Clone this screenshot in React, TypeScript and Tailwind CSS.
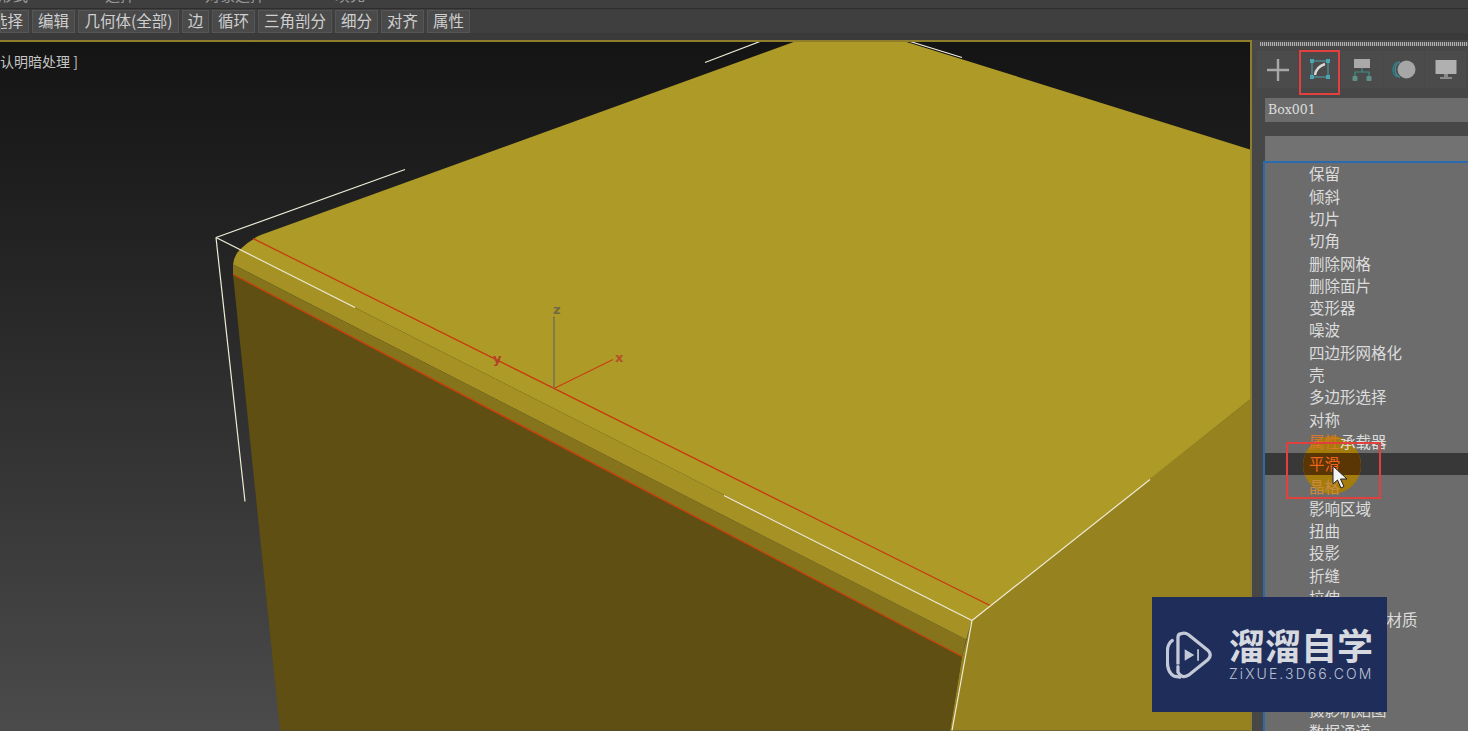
import React from "react";

const tools = [
  ["选择", "w-[29px] justify-end pr-[5px]"],
  ["编辑", "w-[43px] justify-center"],
  ["几何体(全部)", "w-[101px] justify-center"],
  ["边", "w-[27px] justify-center"],
  ["循环", "w-[43px] justify-center"],
  ["三角剖分", "w-[74px] justify-center"],
  ["细分", "w-[43px] justify-center"],
  ["对齐", "w-[43px] justify-center"],
  ["属性", "w-[43px] justify-center"],
];

const mods = [
  "保留", "倾斜", "切片", "切角", "删除网格", "删除面片", "变形器", "噪波", "四边形网格化", "壳",
  "多边形选择", "对称", "属性承载器", "平滑", "晶格", "影响区域", "扭曲", "投影", "折缝", "拉伸",
  "按元素分配材质", "", "", "", "摄影机贴图", "数据通道",
];

function Scene() {
  return (
    <svg viewBox="0 43 1250 688" className="block w-full h-full">
      {/* right face */}
      <polygon points="972,620 1250,400 1250,731 950,731 962,657" fill="#96831f" />
      {/* top face */}
      <path d="M262,235 L795,42 L905,42 L1250,150 L1250,400 L972,621 L240,250 Q250,240 262,235 Z" fill="#ae9a26" />
      {/* light bevel */}
      <path d="M240,250 L972,621 L966,640 L233,265 Q234,256 240,250 Z" fill="#a59124" />
      {/* dark bevel */}
      <polygon points="233,265 966,640 962,657 233,275" fill="#85741b" />
      {/* front face */}
      <polygon points="233,275 962,657 950,731 280,731" fill="#5f4f12" />
      {/* red edges */}
      <line x1="253" y1="239" x2="990" y2="606" stroke="#c9370f" strokeWidth="1.2" />
      <line x1="233" y1="275" x2="962" y2="657" stroke="#c9400f" strokeWidth="1.4" />
      {/* selection brackets */}
      <g stroke="#efedd8" strokeWidth="1.2" fill="none">
        <line x1="216" y1="238" x2="405" y2="170" />
        <line x1="216" y1="238" x2="355" y2="308" />
        <line x1="216" y1="238" x2="245" y2="502" />
        <line x1="705" y1="63" x2="760" y2="42" />
        <line x1="910" y1="42" x2="962" y2="58" />
        <line x1="724" y1="496" x2="972" y2="621" />
        <line x1="1150" y1="480" x2="972" y2="621" />
        <line x1="972" y1="621" x2="952" y2="731" />
      </g>
      {/* gizmo */}
      <line x1="554" y1="389" x2="554" y2="317" stroke="#75705a" strokeWidth="1.5" />
      <line x1="554" y1="389" x2="613" y2="360" stroke="#c9400f" strokeWidth="1.2" />
      <text x="553" y="314" fontSize="13" fontWeight="700" fill="#6f6a45" fontFamily="DejaVu Sans, sans-serif">z</text>
      <text x="615" y="362" fontSize="13" fontWeight="700" fill="#b5502a" fontFamily="DejaVu Sans, sans-serif">x</text>
      <text x="493" y="363" fontSize="13" fontWeight="700" fill="#b5402a" fontFamily="DejaVu Sans, sans-serif">y</text>
    </svg>
  );
}

function ModifyIcon() {
  return (
    <svg width="20" height="20" viewBox="0 0 20 20" className="-mt-[2px]">
      <rect x="2" y="2" width="16" height="16" fill="none" stroke="#4fa3ad" strokeWidth="1" />
      <rect x="0" y="0" width="4" height="4" fill="#4aa5b3" />
      <rect x="16" y="0" width="4" height="4" fill="#4aa5b3" />
      <rect x="0" y="16" width="4" height="4" fill="#4aa5b3" />
      <rect x="16" y="16" width="4" height="4" fill="#4aa5b3" />
      <path d="M5,16 Q6,8 15,5" fill="none" stroke="#d8d8d8" strokeWidth="2.4" />
    </svg>
  );
}

function HierarchyIcon() {
  return (
    <svg width="20" height="22" viewBox="0 0 20 22">
      <rect x="2" y="0" width="16" height="9" fill="#a9a9a9" />
      <path d="M10,9 V13 M3,18 V13 H17 V18" fill="none" stroke="#3d8f8a" strokeWidth="1.2" />
      <rect x="0.5" y="17" width="5" height="5" rx="1" fill="#5f9088" />
      <rect x="14.5" y="17" width="5" height="5" rx="1" fill="#5f9088" />
    </svg>
  );
}

function MotionIcon() {
  return (
    <svg width="25" height="19" viewBox="0 0 25 19">
      <path d="M6,2 A9,9 0 0 0 6,17" fill="none" stroke="#2f7f86" strokeWidth="1.4" />
      <path d="M9,1.5 A9,9 0 0 0 9,17.5" fill="none" stroke="#3a9098" strokeWidth="1.4" />
      <circle cx="15.5" cy="9.5" r="9" fill="#a6a6a6" />
    </svg>
  );
}

function DisplayIcon() {
  return (
    <svg width="22" height="20" viewBox="0 0 22 20">
      <rect x="0.5" y="0" width="21" height="14" fill="#b0b0b0" />
      <rect x="9" y="14" width="4" height="3" fill="#8a8a8a" />
      <rect x="5" y="17" width="12" height="2" fill="#8a8a8a" />
    </svg>
  );
}

function Logo() {
  return (
    <div className="absolute left-[1152px] top-[597px] w-[235px] h-[115px] bg-[#1f2d5b] z-40 flex items-center pl-[14px] gap-[16px]">
      <svg width="47" height="50" viewBox="0 0 48 52" className="shrink-0">
        <path d="M15,4 Q19,2 23,5 L43,21 Q48,26 43,31 L23,47 Q16,51 12,44 L12,38" fill="none" stroke="#c3c9d6" strokeWidth="3.4" strokeLinecap="round" />
        <path d="M12,36 V8 Q12,4 15,4" fill="none" stroke="#c3c9d6" strokeWidth="3.4" />
        <path d="M6,11 Q1,15 1,22 V33 Q1,44 8,48 L14,49" fill="none" stroke="#c3c9d6" strokeWidth="3.4" strokeLinecap="round" />
        <polygon points="19,20 29,26 19,32" fill="#c3c9d6" />
        <rect x="32" y="20" width="1.8" height="12" fill="#c3c9d6" />
      </svg>
      <div className="flex flex-col -mt-[4px]">
        <div className="text-[36px] leading-[40px] font-bold text-[#d6d9df] whitespace-nowrap font-['Noto_Sans_CJK_SC',sans-serif]">溜溜自学</div>
        <div className="text-[14px] leading-[16px] mt-[2px] tracking-[2.1px] font-light text-[#bcc3d1] whitespace-nowrap font-['Inter',sans-serif]">ZiXUE.3D66.COM</div>
      </div>
    </div>
  );
}

function Cursor() {
  return (
    <svg width="20" height="28" viewBox="0 0 20 28" className="absolute left-[1331px] top-[464px] z-30">
      <path d="M2,2 L2,20 L6.5,16 L10,24 L13,22.5 L9.5,15 L16,15 Z" fill="#f4f4f4" stroke="#222" strokeWidth="1" />
    </svg>
  );
}

export default function App() {
  return (
    <div className="relative w-[1468px] h-[731px] overflow-hidden bg-[#414141] flex flex-col font-['Noto_Sans_CJK_SC',sans-serif]">
      {/* clipped menu row */}
      <div className="h-[9px] shrink-0 overflow-hidden bg-[#3f3f3f] border-b border-[#2e2e2e] relative">
        <div className="flex text-[15px] leading-[20px] text-[#9a9a9a] -mt-[15px] -ml-[2px]">
          <span className="w-[107px]">形式</span>
          <span className="w-[100px]">选择</span>
          <span className="w-[130px]">对象选择</span>
          <span>填充</span>
        </div>
      </div>
      {/* toolbar */}
      <div className="h-[24px] shrink-0 flex gap-[3px] pt-[1px] bg-[#3f3f3f]">
        {tools.map(([t, c]) => (
          <div key={t} className={`${c} h-[23px] flex items-center pb-[2px] bg-[#4a4a4a] border border-[#565656] text-[15.5px] leading-none text-[#cfcfcf] whitespace-nowrap overflow-hidden`}>
            {t}
          </div>
        ))}
      </div>
      <div className="h-[7px] shrink-0 bg-[#3a3a3a]" />
      <div className="flex-1 flex min-h-0">
        {/* viewport */}
        <div className="relative w-[1252px] shrink-0 border-t-2 border-r-2 border-[#8f7f2c] bg-gradient-to-b from-[#141414] to-[#4b4b4b] overflow-hidden">
          <Scene />
          <div className="absolute left-0 top-[9px] text-[14px] leading-[20px] text-[#c4c4c4] whitespace-nowrap">认明暗处理 ]</div>
        </div>
        {/* command panel */}
        <div className="flex-1 min-w-0 flex flex-col bg-[#474747]">
          <div className="h-[4px] mt-[2px] ml-[8px] shrink-0 bg-[repeating-linear-gradient(90deg,#b0b0b0_0_1px,#5a5a5a_1px_2px)]" />
          <div className="flex mt-[5px] ml-[5px] h-[37px] shrink-0 gap-[1px]">
            <div className="w-[41px] flex items-center justify-center bg-[#4b4b4b]">
              <svg width="22" height="22" viewBox="0 0 22 22"><path d="M11,0 V22 M0,11 H22" stroke="#a8a8a8" strokeWidth="2.4" /></svg>
            </div>
            <div className="w-[41px] flex items-center justify-center bg-[#4b4b4b]"><ModifyIcon /></div>
            <div className="w-[41px] flex items-center justify-center bg-[#4b4b4b]"><HierarchyIcon /></div>
            <div className="w-[41px] flex items-center justify-center bg-[#4b4b4b]"><MotionIcon /></div>
            <div className="w-[41px] flex items-center justify-center bg-[#4b4b4b]"><DisplayIcon /></div>
          </div>
          <div className="h-[10px] shrink-0" />
          <div className="ml-[13px] h-[24px] shrink-0 bg-[#6c6c6c] flex items-center pl-[3px] text-[12.5px] text-[#dedede] font-['DejaVu_Serif',serif]">Box001</div>
          <div className="h-[14px] shrink-0" />
          <div className="ml-[13px] h-[25px] shrink-0 bg-[#727272]" />
          <div className="ml-[11px] flex-1 min-h-0 border-l-2 border-t-2 border-[#2a6aae] bg-[#6c6c6c] overflow-hidden">
            {mods.map((m, i) => (
              <div key={i} className={`h-[22.3px] flex items-center pl-[44px] text-[15.5px] leading-none whitespace-nowrap ${i === 13 ? "bg-[#383838]" : ""}`}>
                {i === 12 ? (
                  <span className="relative z-20 text-[#dcdcdc]"><span className="text-[#d9772a]">属性</span>承载器</span>
                ) : (
                  <span className={`relative z-20 ${i === 13 ? "text-[#f0641e]" : i === 14 ? "text-[#c98a40]" : "text-[#dcdcdc]"}`}>{m}</span>
                )}
              </div>
            ))}
          </div>
        </div>
      </div>

      {/* click highlight under the cursor */}
      <svg width="64" height="60" viewBox="0 0 64 60" className="absolute left-[1302px] top-[436px] z-10">
        <defs>
          <clipPath id="band"><rect x="0" y="17" width="64" height="22" /></clipPath>
        </defs>
        <circle cx="30" cy="29" r="29" fill="#a47c0c" />
        <circle cx="30" cy="29" r="29" fill="#5a3604" clipPath="url(#band)" />
      </svg>
      <Cursor />

      {/* tutorial annotations */}
      <div className="absolute left-[1299px] top-[50px] w-[41px] h-[45px] border-[2.5px] border-[#e2403c] z-30" />
      <div className="absolute left-[1286px] top-[442px] w-[95px] h-[57px] border-[2.5px] border-[#e2403c] z-30" />
      <Logo />
    </div>
  );
}
